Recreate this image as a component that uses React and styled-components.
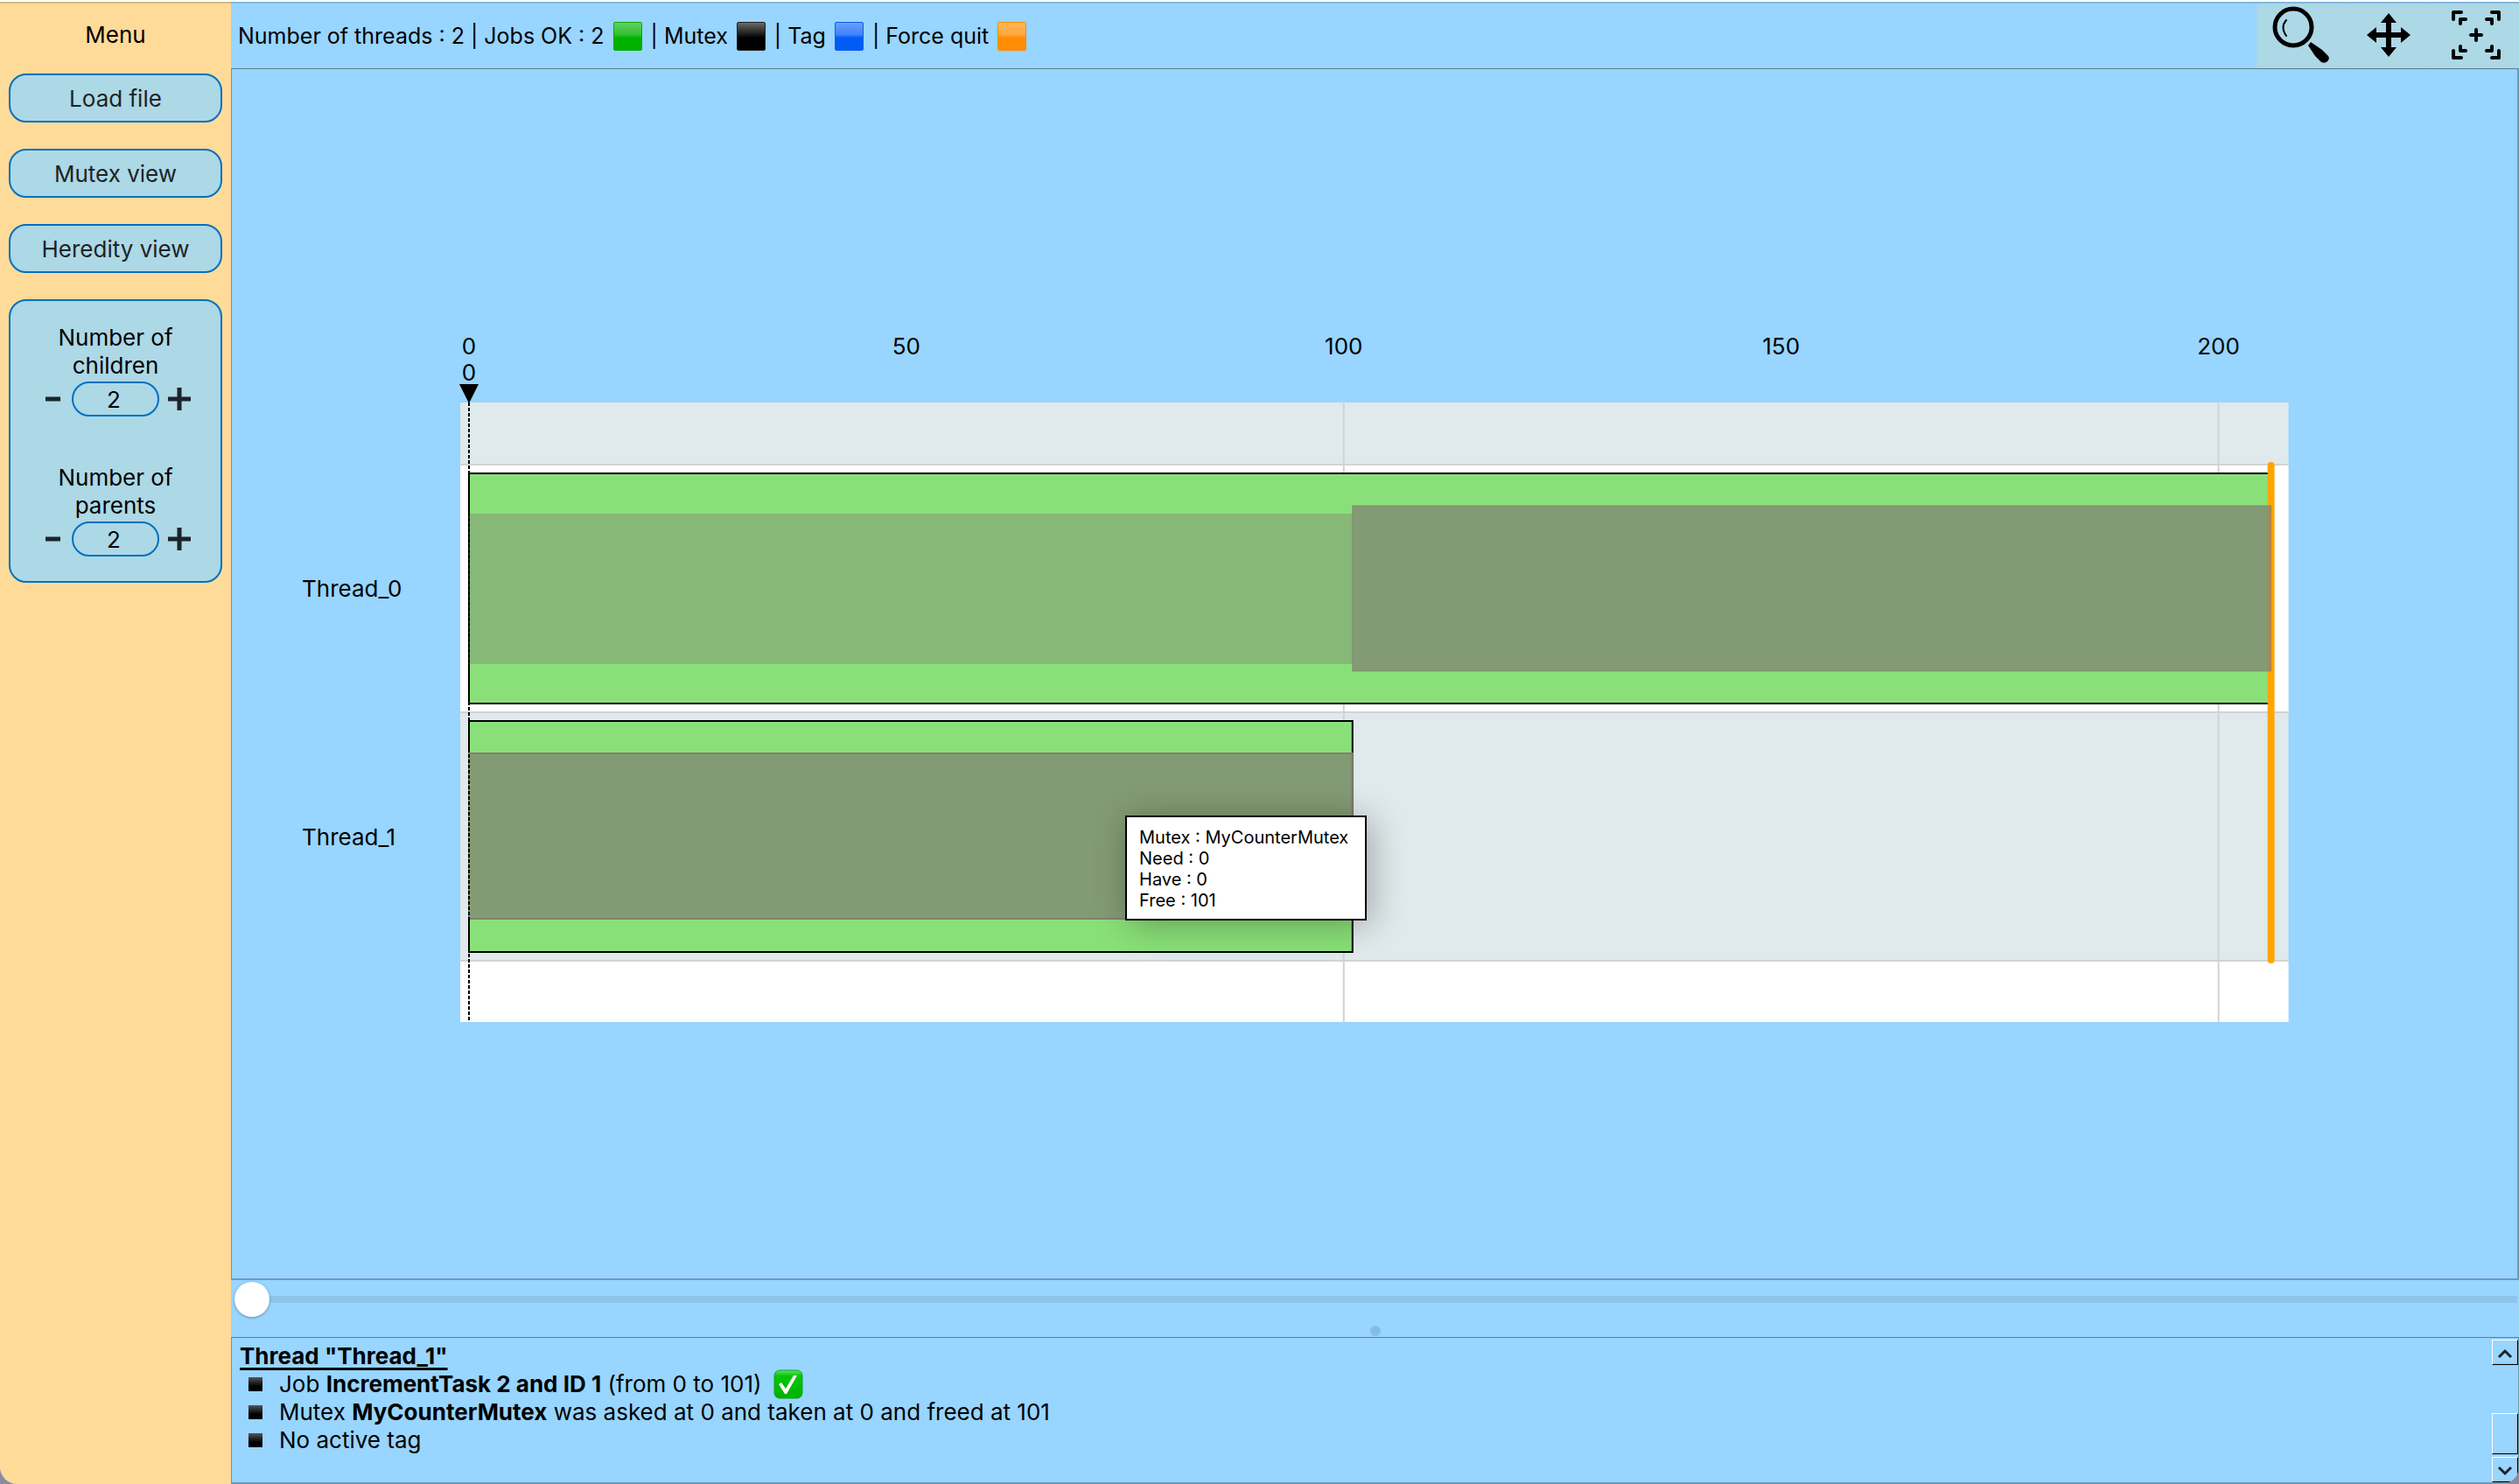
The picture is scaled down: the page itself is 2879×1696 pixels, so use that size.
import React, { useState } from "react";
import styled, { createGlobalStyle } from "styled-components";

const GlobalStyle = createGlobalStyle`
  * { box-sizing: border-box; }
  body {
    margin: 0;
    background: #8c8a9c;
    color: #000;
    font: 26px/32px Inter, "Liberation Sans", sans-serif;
  }
  button, input { font: inherit; color: inherit; }
`;

const Window = styled.div`
  display: grid;
  grid-template-columns: 264px minmax(0, 1fr);
  min-height: 100vh;
  border-top: 2px solid #fff;
  border-radius: 0 0 20px 20px;
  overflow: hidden;
  background: #98d5ff;
`;

const Sidebar = styled.aside`
  display: flex;
  flex-direction: column;
  gap: 30px;
  padding: 0 10px;
  border-top: 2px solid rgba(0, 0, 0, 0.15);
  background: #ffdb99;
`;

const MenuTitle = styled.h1`
  margin: 0;
  padding: 20px 0 0;
  height: 50px;
  font-size: 26px;
  line-height: 32px;
  font-weight: 400;
  text-align: center;
`;

const MenuButton = styled.button`
  height: 56px;
  padding: 2px 0 0;
  border: 2px solid #0070c0;
  border-radius: 20px;
  background: #add8e6;
  color: #1c2427;
  cursor: pointer;
`;

const Settings = styled.section`
  display: flex;
  flex-direction: column;
  gap: 54px;
  height: 324px;
  padding: 26px 20px;
  border: 2px solid #0070c0;
  border-radius: 20px;
  background: #add8e6;
`;

const Setting = styled.div`
  display: flex;
  flex-direction: column;
  align-items: center;
  text-align: center;
`;

const SettingLabel = styled.label`
  width: 160px;
  height: 66px;
`;

const Stepper = styled.div`
  display: flex;
  align-items: center;
  justify-content: center;
  height: 40px;
`;

const StepButton = styled.button`
  display: flex;
  align-items: center;
  justify-content: center;
  width: 46px;
  height: 40px;
  padding: 0;
  border: 0;
  background: none;
  color: #1c2427;
  cursor: pointer;
`;

const StepValue = styled.input`
  width: 100px;
  height: 40px;
  padding: 0 4px 0 0;
  border: 2px solid #0070c0;
  border-radius: 20px;
  background: transparent;
  text-align: center;
`;

const Main = styled.main`
  display: flex;
  flex-direction: column;
  min-width: 0;
`;

const TopBar = styled.header`
  display: flex;
  justify-content: space-between;
  height: 76px;
  border-top: 2px solid #7fb9e0;
`;

const Legend = styled.div`
  display: flex;
  align-items: center;
  gap: 10px;
  padding-left: 8px;
  font-size: 25px;
  white-space: nowrap;
`;

const LegendItem = styled.span`
  display: flex;
  align-items: center;
  gap: 10px;
`;

const Swatch = styled.span`
  width: 33px;
  height: 33px;
  border-radius: 2px;
  border: 1px solid ${(p) => p.$edge};
  background: linear-gradient(${(p) => p.$light}, ${(p) => p.$mid} 45%, ${(p) => p.$color} 55%);
`;

const Tools = styled.div`
  display: flex;
`;

const ToolButton = styled.button`
  width: 100px;
  height: 74px;
  padding: 0;
  border: 0;
  border-radius: 4px;
  background: #add8e6;
  color: #000;
  cursor: pointer;

  svg { display: block; }
`;

const ChartArea = styled.section`
  display: grid;
  grid-template-columns: 10% minmax(0, 80%) 10%;
  align-content: center;
  flex: 1;
  border-style: solid;
  border-color: #5a7c92 #6c9ab9 #6c9ab9;
  border-width: 1px 2px 2px 1px;
`;

const ThreadNames = styled.div`
  padding: 161px 0 0 80px;
`;

const ThreadName = styled.div`
  display: flex;
  align-items: center;
  height: 284px;
`;

const Plot = styled.div`
  position: relative;
  height: 800px;
`;

const PlotSvg = styled.svg`
  display: block;
  width: 100%;
  height: 800px;
  overflow: visible;
`;

const Tooltip = styled.div`
  position: absolute;
  top: 562px;
  padding: 11px 14px;
  width: 276px;
  height: 120px;
  border: 2px solid #000;
  background: #fff;
  font-size: 20px;
  line-height: 24px;
  white-space: nowrap;
  box-shadow: 4px 4px 40px rgba(0, 0, 0, 0.3);
`;

const TimeSlider = styled.input`
  appearance: none;
  display: block;
  width: calc(100% - 6px);
  height: 40px;
  margin: 2px 2px 10px 4px;
  background: linear-gradient(#8fc5ea, #8fc5ea) center / 100% 8px no-repeat;

  &::-webkit-slider-thumb {
    appearance: none;
    width: 40px;
    height: 40px;
    border-radius: 50%;
    background: #fff;
    box-shadow: 0 1px 3px rgba(0, 0, 0, 0.35);
  }
`;

const Splitter = styled.div`
  display: flex;
  justify-content: center;
  height: 13px;

  &::after {
    content: "";
    width: 12px;
    height: 12px;
    border-radius: 50%;
    background: #86bde0;
  }
`;

const Details = styled.section`
  display: flex;
  justify-content: space-between;
  height: 168px;
  border-style: solid;
  border-color: #5a7c92 #6c9ab9 #6c9ab9;
  border-width: 1px 1px 2px 1px;
`;

const DetailsText = styled.div`
  padding: 5px 0 0 9px;
`;

const DetailsTitle = styled.h2`
  margin: 0;
  font-size: 26px;
  line-height: 32px;
  font-weight: 700;
  text-decoration: underline;
  text-decoration-thickness: 3px;
  text-underline-offset: 4px;
  text-decoration-skip-ink: none;
`;

const DetailsList = styled.ul`
  margin: 0;
  padding: 0 0 0 10px;
  list-style: none;
`;

const DetailsItem = styled.li`
  display: flex;
  align-items: center;
  height: 32px;
  white-space: pre;

  &::before {
    content: "";
    width: 16px;
    height: 16px;
    margin-right: 19px;
    background: linear-gradient(#555, #000 65%);
  }
`;

const CheckMark = styled.svg`
  width: 34px;
  height: 34px;
  margin-left: 14px;
`;

const ScrollBar = styled.div`
  display: flex;
  flex-direction: column;
  width: 30px;
  padding-top: 2px;
`;

const ScrollButton = styled.button`
  display: flex;
  align-items: center;
  justify-content: center;
  height: 29px;
  padding: 2px 0 0;
  border-style: solid;
  border-width: 1px;
  border-color: #fff #000 #000 #fff;
  box-shadow: inset -1px -1px #b8b8b8;
  background: #98d5ff;
  color: #1c2427;
`;

const ScrollTrack = styled.div`
  display: flex;
  flex: 1;
  flex-direction: column;
  justify-content: flex-end;
  padding-bottom: 3px;
`;

const ScrollThumb = styled.div`
  height: 47px;
  border-style: solid;
  border-width: 1px;
  border-color: #fff #000 #000 #fff;
  box-shadow: inset -1px -1px #b8b8b8;
`;

const TOP = 90;
const at = (time) => `${((time + 1) / 209) * 100}%`;
const span = (from, to) => `${((to - from) / 209) * 100}%`;

const rowLines = [71, 354, 638];
const ticks = [0, 50, 100, 150, 200];

function NumberSetting({ id, label }) {
  const [value, setValue] = useState(2);
  return (
    <Setting>
      <SettingLabel htmlFor={id}>{label}</SettingLabel>
      <Stepper>
        <StepButton aria-label="Decrease" onClick={() => setValue(Math.max(0, value - 1))}>
          <svg width="26" height="26"><path d="M6 13H23" stroke="currentColor" strokeWidth="5" /></svg>
        </StepButton>
        <StepValue
          id={id}
          inputMode="numeric"
          value={value}
          onChange={(e) => setValue(Number(e.target.value) || 0)}
        />
        <StepButton aria-label="Increase" onClick={() => setValue(value + 1)}>
          <svg width="26" height="26"><path d="M0 13H26M13 0V26" stroke="currentColor" strokeWidth="5" /></svg>
        </StepButton>
      </Stepper>
    </Setting>
  );
}

function Timeline() {
  return (
    <PlotSvg role="img" aria-label="Thread timeline">
      {ticks.map((t) => (
        <text key={t} x={at(t)} y="35" textAnchor="middle">{t}</text>
      ))}
      <text x={at(0)} y="65" textAnchor="middle">0</text>
      <svg x={at(0)} y="69" overflow="visible">
        <path d="M-11 0H11L0 22Z" />
      </svg>

      <svg y={TOP} overflow="visible">
        <rect width="100%" height="71" fill="#e0e9eb" />
        <rect y="71" width="100%" height="283" fill="#fff" />
        <rect y="354" width="100%" height="284" fill="#e0e9eb" />
        <rect y="638" width="100%" height="70" fill="#fff" />
        {[100, 200].map((t) => (
          <line key={t} x1={at(t)} x2={at(t)} y1="-1" y2="709" stroke="#d3d3d3" strokeWidth="2" />
        ))}
        {rowLines.map((y) => (
          <line key={y} x1="0" x2="100%" y1={y} y2={y} stroke="#d3d3d3" strokeWidth="2" strokeLinecap="square" />
        ))}

        <rect x={at(0)} y="81" width={span(0, 206)} height="263" fill="#8ae078" stroke="#000" strokeWidth="2" />
        <rect x={at(0)} y="364" width={span(0, 101)} height="264" fill="#8ae078" stroke="#000" strokeWidth="2" />
        <line x1={at(206)} x2={at(206)} y1="72" y2="637" stroke="#ffa500" strokeWidth="8" strokeLinecap="round" />

        <rect x={at(0)} y="127" width={span(0, 101)} height="172" fill="rgba(128,126,120,.4)" />
        <rect x={at(101)} y="118" width={span(101, 206)} height="189" fill="rgba(128,126,114,.7)" stroke="rgba(128,118,112,.6)" />
        <rect x={at(0)} y="401" width={span(0, 101)} height="189" fill="rgba(128,126,114,.7)" stroke="#837f72" strokeWidth="2" />
        <line x1={at(0)} x2={at(0)} y1="0" y2="708" stroke="#000" strokeWidth="2" strokeDasharray="4 2" />
      </svg>
    </PlotSvg>
  );
}

export default function App() {
  const [time, setTime] = useState(0);
  return (
    <>
      <GlobalStyle />
      <Window>
        <Sidebar>
          <MenuTitle>Menu</MenuTitle>
          <MenuButton>Load file</MenuButton>
          <MenuButton>Mutex view</MenuButton>
          <MenuButton>Heredity view</MenuButton>
          <Settings>
            <NumberSetting id="children" label="Number of children" />
            <NumberSetting id="parents" label="Number of parents" />
          </Settings>
        </Sidebar>

        <Main>
          <TopBar>
            <Legend>
              <LegendItem>Number of threads : 2 | Jobs OK : 2
                <Swatch $edge="#0aa80a" $light="#62d062" $mid="#2fc02f" $color="#00b200" />
              </LegendItem>
              <LegendItem>| Mutex
                <Swatch $edge="#222" $light="#6a6a6a" $mid="#151515" $color="#000" />
              </LegendItem>
              <LegendItem>| Tag
                <Swatch $edge="#0a5cf0" $light="#6ba0ff" $mid="#3d80fa" $color="#005cf5" />
              </LegendItem>
              <LegendItem>| Force quit
                <Swatch $edge="#ff8c05" $light="#ffb75c" $mid="#ffa63a" $color="#ff8c05" />
              </LegendItem>
            </Legend>
            <Tools>
              <ToolButton aria-label="Zoom">
                <svg width="100" height="74" fill="none" stroke="#000">
                  <circle cx="42" cy="27" r="21" strokeWidth="5" />
                  <path d="M34 19Q27 27 34 37" strokeWidth="2" strokeLinecap="round" />
                  <path d="M59 48L62 44L75 53L82 60C85 64 79 70 74 67L67 60Z" fill="#000" stroke="none" />
                </svg>
              </ToolButton>
              <ToolButton aria-label="Move">
                <svg width="100" height="74">
                  <path d="M51 11L60 22H54V33H65V27L76 36L65 45V39H54V50H60L51 61L42 50H48V39H37V45L26 36L37 27V33H48V22H42Z" />
                </svg>
              </ToolButton>
              <ToolButton aria-label="Fit to view">
                <svg width="100" height="74" fill="none" stroke="#000" strokeWidth="4" strokeLinecap="round" strokeLinejoin="round">
                  <path d="M25 18V10H34M33 23V18H39" />
                  <path d="M69 10H77V18M63 18H69V23" />
                  <path d="M25 54V62H34M33 49V54H39" />
                  <path d="M69 62H77V54M63 54H69V49" />
                  <path d="M45 36H57M51 30V42" />
                </svg>
              </ToolButton>
            </Tools>
          </TopBar>

          <ChartArea>
            <ThreadNames>
              <ThreadName>Thread_0</ThreadName>
              <ThreadName>Thread_1</ThreadName>
            </ThreadNames>
            <Plot>
              <Timeline />
              <Tooltip role="tooltip" style={{ left: at(75) }}>
                <div>Mutex : MyCounterMutex</div>
                <div>Need : 0</div>
                <div>Have : 0</div>
                <div>Free : 101</div>
              </Tooltip>
            </Plot>
          </ChartArea>

          <TimeSlider
            type="range"
            aria-label="Time"
            min="0"
            max="206"
            value={time}
            onChange={(e) => setTime(Number(e.target.value))}
          />
          <Splitter />

          <Details>
            <DetailsText>
              <DetailsTitle>Thread "Thread_1"</DetailsTitle>
              <DetailsList>
                <DetailsItem>
                  <span>Job <b>IncrementTask 2 and ID 1</b> (from 0 to 101)</span>
                  <CheckMark viewBox="0 0 34 34" role="img" aria-label="OK">
                    <defs>
                      <linearGradient id="ok" x1="0" y1="0" x2="0" y2="1">
                        <stop offset="0" stopColor="#66e066" />
                        <stop offset=".2" stopColor="#06c606" />
                        <stop offset="1" stopColor="#00b000" />
                      </linearGradient>
                    </defs>
                    <rect x="1" y="1" width="32" height="32" rx="6" fill="url(#ok)" stroke="#0ca62c" />
                    <path d="M6 17L9 15L14 22L23 7L27 7L15 28H13Z" fill="#fff" />
                  </CheckMark>
                </DetailsItem>
                <DetailsItem>
                  <span>Mutex <b>MyCounterMutex</b> was asked at 0 and taken at 0 and freed at 101</span>
                </DetailsItem>
                <DetailsItem><span>No active tag</span></DetailsItem>
              </DetailsList>
            </DetailsText>
            <ScrollBar>
              <ScrollButton aria-label="Scroll up">
                <svg width="18" height="12" fill="none"><path d="M2 10L9 3L16 10" stroke="currentColor" strokeWidth="3" /></svg>
              </ScrollButton>
              <ScrollTrack><ScrollThumb /></ScrollTrack>
              <ScrollButton aria-label="Scroll down">
                <svg width="18" height="12" fill="none"><path d="M2 2L9 9L16 2" stroke="currentColor" strokeWidth="3" /></svg>
              </ScrollButton>
            </ScrollBar>
          </Details>
        </Main>
      </Window>
    </>
  );
}
